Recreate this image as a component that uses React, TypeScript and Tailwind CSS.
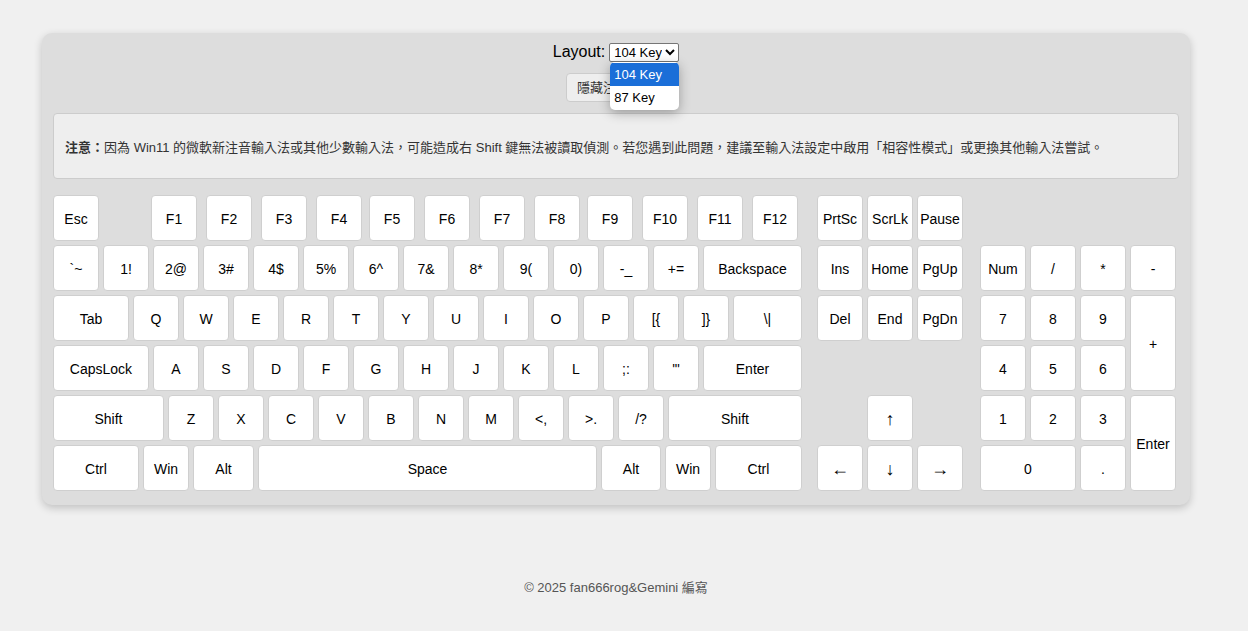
type K = { l: string; w: string; ml?: string };

const topRow: K[] = [
  { l: "Esc", w: "w-[46px]" },
  { l: "F1", w: "w-[46px]", ml: "ml-[52px]" },
  { l: "F2", w: "w-[46px]", ml: "ml-[9px]" },
  { l: "F3", w: "w-[46px]", ml: "ml-[9px]" },
  { l: "F4", w: "w-[46px]", ml: "ml-[9px]" },
  { l: "F5", w: "w-[46px]", ml: "ml-[7px]" },
  { l: "F6", w: "w-[46px]", ml: "ml-[9px]" },
  { l: "F7", w: "w-[46px]", ml: "ml-[9px]" },
  { l: "F8", w: "w-[46px]", ml: "ml-[9px]" },
  { l: "F9", w: "w-[46px]", ml: "ml-[7px]" },
  { l: "F10", w: "w-[46px]", ml: "ml-[9px]" },
  { l: "F11", w: "w-[46px]", ml: "ml-[9px]" },
  { l: "F12", w: "w-[46px]", ml: "ml-[9px]" },
];

const sq = (ls: string[]): K[] => ls.map((l) => ({ l, w: "w-[46px]" }));

const mainRows: K[][] = [
  [...sq(["`~", "1!", "2@", "3#", "4$", "5%", "6^", "7&", "8*", "9(", "0)", "-_", "+="]), { l: "Backspace", w: "w-[99px]" }],
  [{ l: "Tab", w: "w-[76px]" }, ...sq(["Q", "W", "E", "R", "T", "Y", "U", "I", "O", "P", "[{", "]}"]), { l: "\\|", w: "w-[69px]" }],
  [{ l: "CapsLock", w: "w-[96px]" }, ...sq(["A", "S", "D", "F", "G", "H", "J", "K", "L", ";:", "'\""]), { l: "Enter", w: "w-[99px]" }],
  [{ l: "Shift", w: "w-[111px]" }, ...sq(["Z", "X", "C", "V", "B", "N", "M", "<,", ">.", "/?"]), { l: "Shift", w: "w-[134px]" }],
  [
    { l: "Ctrl", w: "w-[86px]" },
    { l: "Win", w: "w-[46px]" },
    { l: "Alt", w: "w-[61px]" },
    { l: "Space", w: "w-[339px]" },
    { l: "Alt", w: "w-[60px]" },
    { l: "Win", w: "w-[46px]" },
    { l: "Ctrl", w: "w-[87px]" },
  ],
];

const keyCls =
  "h-[46px] flex items-center justify-center pt-[2px] bg-white border border-[#cfcfcf] rounded-[4px] text-[14px] text-black";

function Key({ k }: { k: K }) {
  return <div className={`${keyCls} ${k.w} ${k.ml ?? ""}`}>{k.l}</div>;
}

function Cell({ label, cls = "" }: { label: string; cls?: string }) {
  return <div className={`${keyCls} ${cls}`}>{label}</div>;
}

export default function App() {
  return (
    <div
      className="min-h-[631px] w-full bg-[#f0f0f0]"
      style={{ fontFamily: '"Liberation Sans", "Noto Sans CJK TC", sans-serif' }}
    >
      <div className="w-[1232px] pt-[33px]">
        <div className="mx-auto w-[1148px] bg-[#dddddd] rounded-[10px] shadow-[0_3px_8px_rgba(0,0,0,0.2)] px-[11px] pt-[9px] pb-[14px]">
          <div className="flex items-center justify-center gap-[4px] h-[20px]">
            <span className="text-[16px] text-black">Layout:</span>
            <div className="relative">
              <select
                className="h-[19px] bg-white border border-[#767676] rounded-[2px] text-[13px] text-black"
                defaultValue="104"
              >
                <option value="104">104 Key</option>
                <option value="87">87 Key</option>
              </select>
              <div className="absolute left-[1px] top-[22px] z-10 w-[69px] bg-white rounded-[5px] shadow-[0_3px_12px_rgba(0,0,0,0.3)] overflow-hidden py-[1px] text-[13px]">
                <div className="h-[23px] flex items-center pt-[1px] px-[4px] bg-[#1a6ed8] text-white">104 Key</div>
                <div className="h-[23px] flex items-center pt-[1px] px-[4px] text-black">87 Key</div>
              </div>
            </div>
          </div>

          <div className="flex justify-center mt-[11px]">
            <button className="h-[29px] px-[10px] bg-[#eeeeee] border border-[#cccccc] rounded-[4px] text-[13px] text-[#333333]">
              隱藏注意事項
            </button>
          </div>

          <div className="mt-[11px] h-[66px] flex items-center pt-[4px] px-[11px] bg-[#eeeeee] border border-[#cccccc] rounded-[4px] text-[13px] text-[#333333]">
            <p>
              <b>注意：</b>因為 Win11 的微軟新注音輸入法或其他少數輸入法，可能造成右 Shift 鍵無法被讀取偵測。若您遇到此問題，建議至輸入法設定中啟用「相容性模式」或更換其他輸入法嘗試。
            </p>
          </div>

          <div className="flex mt-[16px]">
            <div className="flex flex-col gap-[4px]">
              <div className="flex">
                {topRow.map((k, i) => (
                  <Key key={i} k={k} />
                ))}
              </div>
              {mainRows.map((row, r) => (
                <div key={r} className="flex gap-[4px]">
                  {row.map((k, i) => (
                    <Key key={i} k={k} />
                  ))}
                </div>
              ))}
            </div>

            <div className="ml-[15px] grid grid-cols-[46px_46px_46px] grid-rows-[46px_46px_46px_46px_46px_46px] gap-[4px]">
              <Cell label="PrtSc" />
              <Cell label="ScrLk" />
              <Cell label="Pause" />
              <Cell label="Ins" />
              <Cell label="Home" />
              <Cell label="PgUp" />
              <Cell label="Del" />
              <Cell label="End" />
              <Cell label="PgDn" />
              <Cell label="↑" cls="col-start-2 row-start-5 !text-[18px]" />
              <Cell label="←" cls="col-start-1 row-start-6 !text-[18px]" />
              <Cell label="↓" cls="col-start-2 row-start-6 !text-[18px]" />
              <Cell label="→" cls="col-start-3 row-start-6 !text-[18px]" />
            </div>

            <div className="ml-[17px] grid grid-cols-[46px_46px_46px_46px] grid-rows-[46px_46px_46px_46px_46px_46px] gap-[4px]">
              <Cell label="Num" cls="row-start-2 col-start-1" />
              <Cell label="/" cls="row-start-2 col-start-2" />
              <Cell label="*" cls="row-start-2 col-start-3" />
              <Cell label="-" cls="row-start-2 col-start-4" />
              <Cell label="7" cls="row-start-3 col-start-1" />
              <Cell label="8" cls="row-start-3 col-start-2" />
              <Cell label="9" cls="row-start-3 col-start-3" />
              <Cell label="+" cls="row-start-3 row-span-2 col-start-4 !h-auto" />
              <Cell label="4" cls="row-start-4 col-start-1" />
              <Cell label="5" cls="row-start-4 col-start-2" />
              <Cell label="6" cls="row-start-4 col-start-3" />
              <Cell label="1" cls="row-start-5 col-start-1" />
              <Cell label="2" cls="row-start-5 col-start-2" />
              <Cell label="3" cls="row-start-5 col-start-3" />
              <Cell label="Enter" cls="row-start-5 row-span-2 col-start-4 !h-auto" />
              <Cell label="0" cls="row-start-6 col-start-1 col-span-2" />
              <Cell label="." cls="row-start-6 col-start-3" />
            </div>
          </div>
        </div>

        <p className="mt-[73px] text-center text-[13px] text-[#555555]">© 2025 fan666rog&amp;Gemini 編寫</p>
      </div>
    </div>
  );
}
